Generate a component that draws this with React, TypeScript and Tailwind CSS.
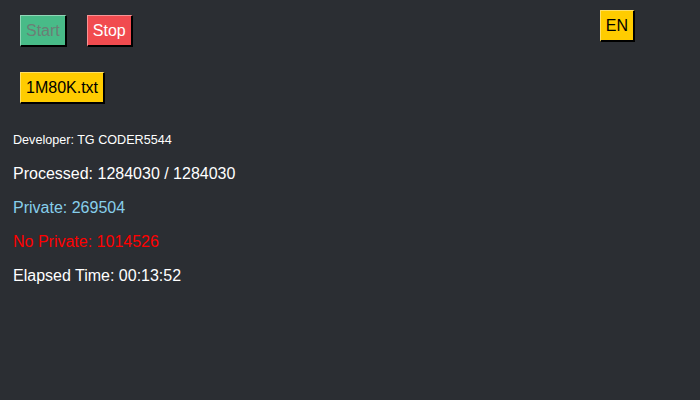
import React from 'react';

const btn =
  'h-[32px] px-[5px] text-[16px] leading-[18px] border-t border-l border-t-white/40 border-l-white/40 border-b-2 border-r-2 border-b-black border-r-black';

export default function App() {
  return (
    <div className="w-[700px] h-[400px] bg-[#2b2e33] font-['Liberation_Sans',Arial,sans-serif] text-white">
      <div className="flex items-start justify-between pl-[20px] pr-[65px]">
        <div className="flex gap-[20px] pt-[15px]">
          <button className={`${btn} bg-[#48bb88] text-[#6b7f76]`}>Start</button>
          <button className={`${btn} bg-[#f14b4f] text-white`}>Stop</button>
        </div>
        <div className="pt-[10px]">
          <button className={`${btn} bg-[#ffcc00] text-black`}>EN</button>
        </div>
      </div>
      <div className="pl-[20px] pt-[25px]">
        <button className={`${btn} h-[31px] bg-[#ffcc00] text-black`}>1M80K.txt</button>
      </div>
      <div className="pl-[13px] pt-[29px]">
        <p className="text-[12.6px] leading-[14px]">Developer: TG CODER5544</p>
        <p className="mt-[18px] text-[16px] leading-[18px]">Processed: 1284030 / 1284030</p>
        <p className="mt-[16px] text-[16px] leading-[18px] text-[#87ceeb]">Private: 269504</p>
        <p className="mt-[16px] text-[16px] leading-[18px] text-[#ff0000]">No Private: 1014526</p>
        <p className="mt-[16px] text-[16px] leading-[18px]">Elapsed Time: 00:13:52</p>
      </div>
    </div>
  );
}
